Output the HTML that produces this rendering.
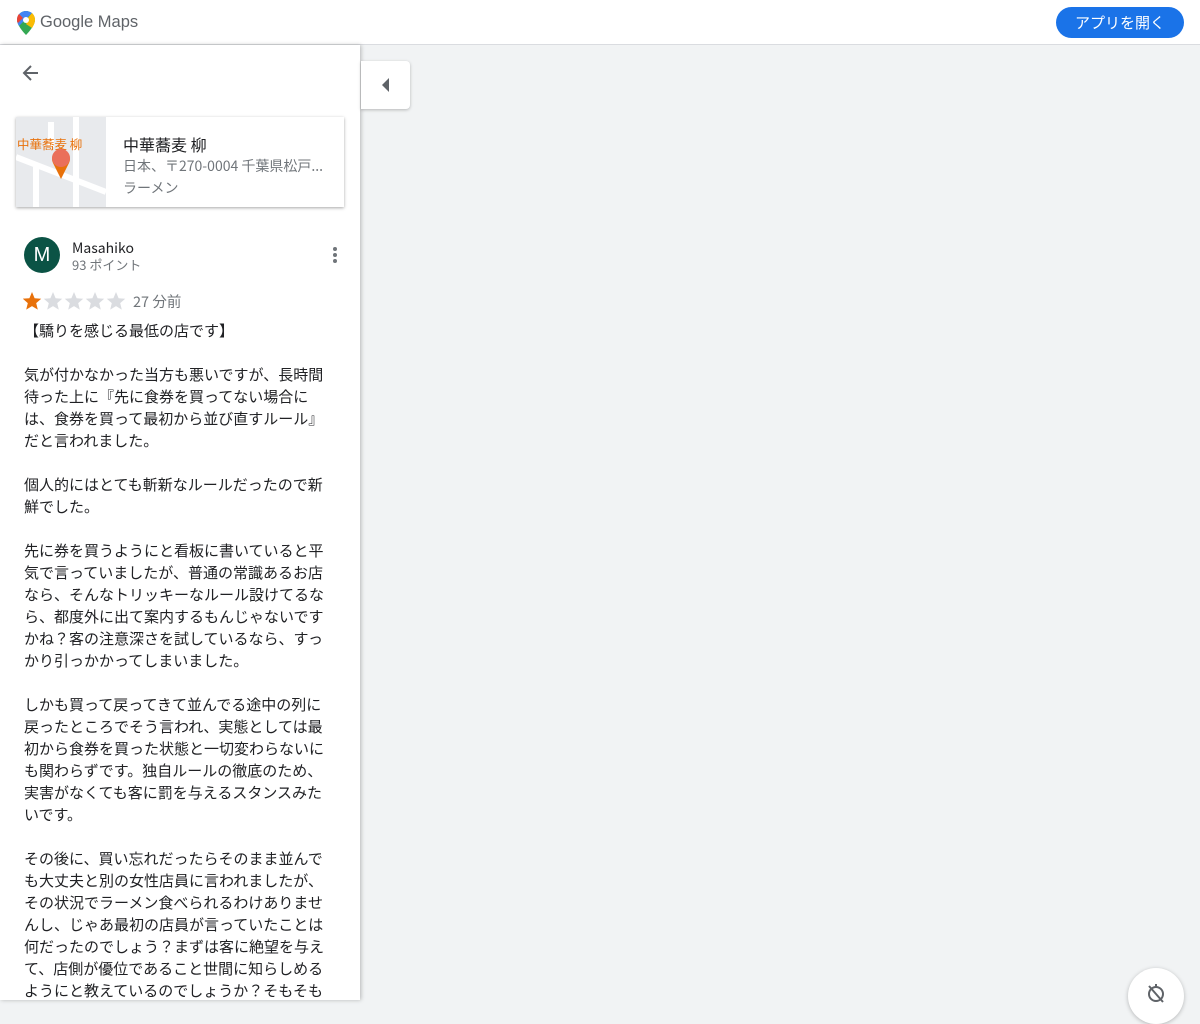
<!DOCTYPE html>
<html><head><meta charset="utf-8"><style>
body{margin:0;width:1200px;height:1000px;overflow:hidden;background:#f1f3f4;font-family:"Liberation Sans","Noto Sans CJK JP",sans-serif;position:relative}
.top{position:absolute;left:0;top:0;width:1200px;height:44px;background:#fff;border-bottom:1px solid #dadce0}
.logo{position:absolute;left:40px;top:13px;font-size:16.5px;color:#5f6368}
.btn{position:absolute;left:1056px;top:7px;width:128px;height:31px;border-radius:16px;background:#1a73e8;color:#fff;font-size:15px;text-align:center;line-height:31px;font-family:"Noto Sans CJK JP",sans-serif}
.panel{position:absolute;left:0;top:45px;width:360px;height:955px;background:#fff;box-shadow:1px 0 4px rgba(0,0,0,.25)}
.card{position:absolute;left:16px;top:72px;width:328px;height:90px;background:#fff;box-shadow:0 1px 3px rgba(0,0,0,.35)}
.map{position:absolute;left:0;top:0;width:90px;height:90px;background:#e8eaed;overflow:hidden}
.review{position:absolute;left:24px;top:275px;font-family:"Noto Sans CJK JP",sans-serif;font-size:15px;line-height:22px;color:#202124;white-space:pre}
.tog{position:absolute;left:361px;top:61px;width:49px;height:48px;background:#fff;border-radius:0 4px 4px 0;box-shadow:0 1px 3px rgba(0,0,0,.25)}
.j{font-family:"Noto Sans CJK JP",sans-serif}
</style></head><body>
<div class="top">
<svg style="position:absolute;left:17px;top:11px" width="18" height="24" viewBox="0 0 18 24"><path d="M9 0C4 0 0 4 0 9c0 6 9 15 9 15s9-9 9-15C18 4 14 0 9 0z" fill="#34a853"/><path d="M9 0C4 0 0 4 0 9c0 2 1 4 2 6L15 2C13 1 11 0 9 0z" fill="#4285f4"/><path d="M2 3C1 4 0 6 0 9c0 1 0 2 1 3l5-5z" fill="#ea4335"/><path d="M18 9c0-3-1-5-3-7L9 9c2 1 0 4 0 4l6 4c2-3 3-6 3-8z" fill="#fbbc04"/><circle cx="9" cy="9" r="3" fill="#fff"/></svg>
<div class="logo">Google Maps</div>
<div class="btn">アプリを開く</div>
</div>
<div class="panel">
<svg style="position:absolute;left:22px;top:19px" width="18" height="18" viewBox="0 0 18 18"><path d="M16 9H3M9 2L2 9l7 7" stroke="#5f6368" stroke-width="2" fill="none"/></svg>
<div class="card">
<div class="map"><svg width="90" height="90"><path d="M0 40 L90 75 M60 0 V90 M20 50 V90 M35 5 V30" stroke="#fff" stroke-width="6" fill="none"/></svg>
<div class="j" style="position:absolute;left:1px;top:17px;font-size:12.5px;color:#e8710a">中華蕎麦 柳</div>
<svg style="position:absolute;left:35px;top:30px" width="20" height="32" viewBox="0 0 20 32"><path d="M10 32L2 16a9 9 0 1116 0z" fill="#e8710a"/><circle cx="10" cy="11" r="9" fill="#ea6f5a"/></svg></div>
<div class="j" style="position:absolute;left:107px;top:15px;font-size:16px;color:#202124">中華蕎麦 柳</div>
<div class="j" style="position:absolute;left:107px;top:39px;font-size:14px;color:#70757a">日本、〒270-0004 千葉県松戸...</div>
<div class="j" style="position:absolute;left:107px;top:61px;font-size:14px;color:#70757a">ラーメン</div>
</div>
<div style="position:absolute;left:24px;top:192px;width:36px;height:36px;border-radius:50%;background:#0b5345;color:#fff;font-size:20px;text-align:center;line-height:36px">M</div>
<div class="j" style="position:absolute;left:72px;top:193px;font-size:14px;color:#202124">Masahiko</div>
<div class="j" style="position:absolute;left:72px;top:210px;font-size:13px;color:#70757a">93 ポイント</div>
<div style="position:absolute;left:333px;top:202px;width:4px">
<div style="width:4px;height:4px;border-radius:2px;background:#70757a;margin-bottom:2px"></div><div style="width:4px;height:4px;border-radius:2px;background:#70757a;margin-bottom:2px"></div><div style="width:4px;height:4px;border-radius:2px;background:#70757a"></div></div>
<svg style="position:absolute;left:23px;top:247px" width="105" height="20" viewBox="0 0 105 20">
<defs><path id="s" d="M9 0l2.6 6.2 6.6.5-5 4.4 1.6 6.5L9 14.1 3.2 17.6l1.6-6.5-5-4.4 6.6-.5z"/></defs>
<use href="#s" fill="#e8710a" x="0"/><use href="#s" fill="#dadce0" x="21"/><use href="#s" fill="#dadce0" x="42"/><use href="#s" fill="#dadce0" x="63"/><use href="#s" fill="#dadce0" x="84"/></svg>
<div class="j" style="position:absolute;left:133px;top:246px;font-size:14.5px;color:#70757a">27 分前</div>
<div class="review">【驕りを感じる最低の店です】

気が付かなかった当方も悪いですが、長時間
待った上に『先に食券を買ってない場合に
は、食券を買って最初から並び直すルール』
だと言われました。

個人的にはとても斬新なルールだったので新
鮮でした。

先に券を買うようにと看板に書いていると平
気で言っていましたが、普通の常識あるお店
なら、そんなトリッキーなルール設けてるな
ら、都度外に出て案内するもんじゃないです
かね？客の注意深さを試しているなら、すっ
かり引っかかってしまいました。

しかも買って戻ってきて並んでる途中の列に
戻ったところでそう言われ、実態としては最
初から食券を買った状態と一切変わらないに
も関わらずです。独自ルールの徹底のため、
実害がなくても客に罰を与えるスタンスみた
いです。

その後に、買い忘れだったらそのまま並んで
も大丈夫と別の女性店員に言われましたが、
その状況でラーメン食べられるわけありませ
んし、じゃあ最初の店員が言っていたことは
何だったのでしょう？まずは客に絶望を与え
て、店側が優位であること世間に知らしめる
ようにと教えているのでしょうか？そもそも</div>
</div>
<div class="tog"><svg style="position:absolute;left:20px;top:17px" width="10" height="14"><path d="M8 0V14L1 7z" fill="#5f6368"/></svg></div>
<div style="position:absolute;left:1128px;top:968px;width:56px;height:56px;border-radius:50%;background:#fff;box-shadow:0 1px 4px rgba(0,0,0,.25)">
<svg style="position:absolute;left:17px;top:14px" width="22" height="22" viewBox="0 0 22 22"><circle cx="11" cy="12" r="7" stroke="#5f6368" stroke-width="2" fill="none"/><path d="M11 2v3M4 4l14 16" stroke="#5f6368" stroke-width="2"/></svg></div>
</body></html>
